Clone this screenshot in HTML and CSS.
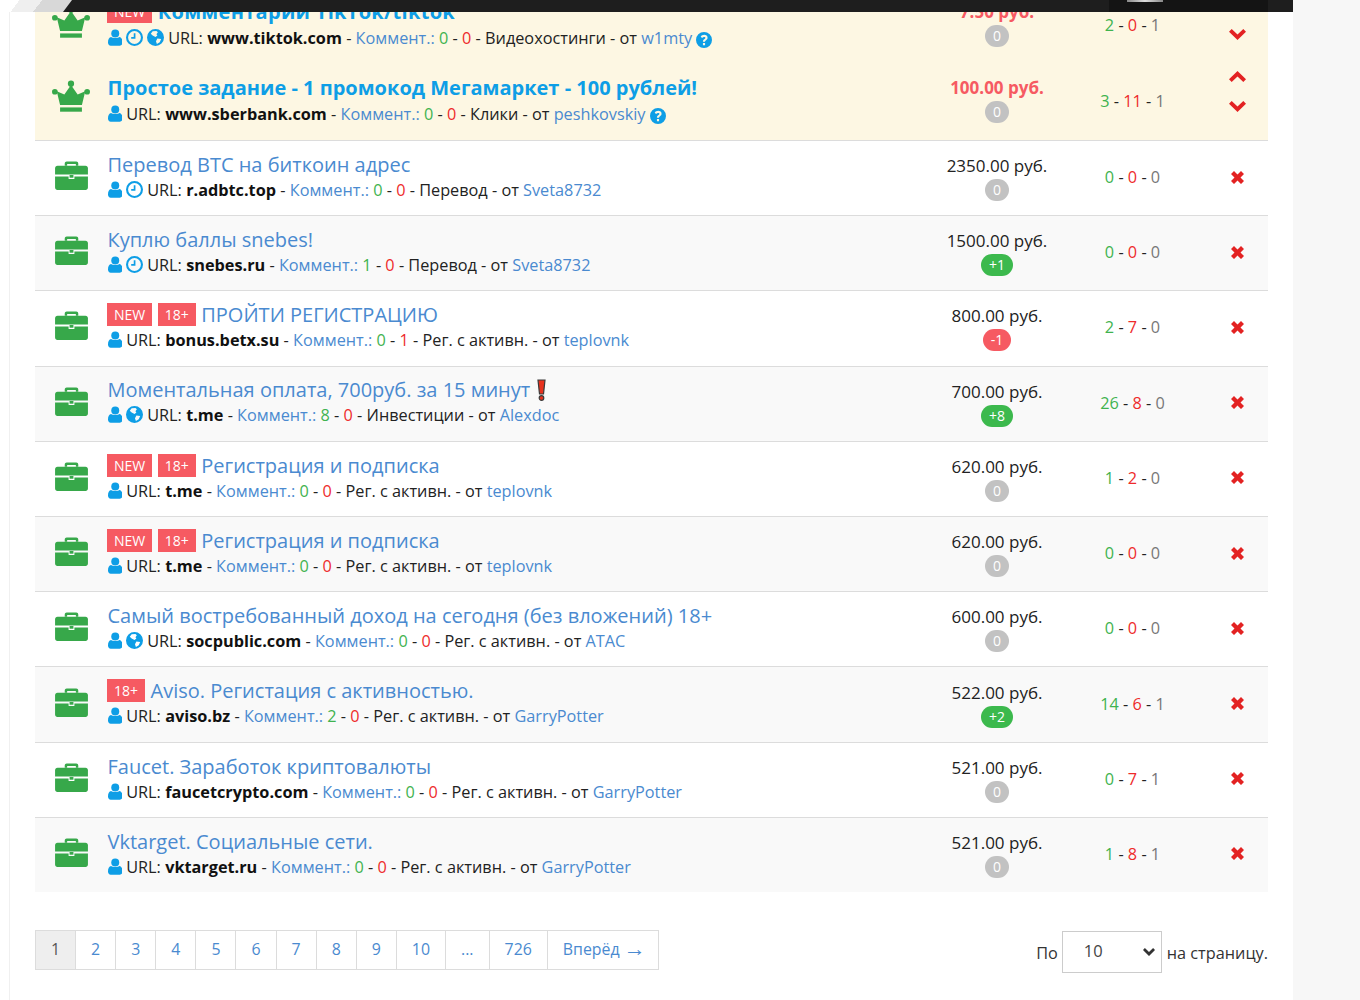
FILE: index.html
```html
<!DOCTYPE html>
<html lang="ru">
<head>
    <meta charset="UTF-8">
    <meta name="viewport" content="width=device-width, initial-scale=1.0">
    <title>Задания</title>
    <link rel="stylesheet" href="styles.css">
</head>
<body>
    <svg class="defs" width="0" height="0">
        <symbol id="i-crown" viewBox="0 0 40 34">
            <circle cx="20" cy="3.5" r="3.3"/><circle cx="3" cy="12" r="3"/><circle cx="37" cy="12" r="3"/>
            <path d="M20 5 27 15 35 11.5 31.5 26H8.500L5 11.500 13 15Z"/>
            <path d="M8.500 28.500h23v4.500h-23z"/>
        </symbol>
        <symbol id="i-case" viewBox="0 0 34 30">
            <path d="M10 5V2.500C10 1.300 11 .5 12 .5h10c1.100 0 2 .8 2 2V5h-2.500V3h-9v2Z"/>
            <path d="M2.500 5h29C33 5 34 6 34 7.500V14H0V7.500C0 6 1 5 2.500 5Z"/>
            <path d="M0 16h14v2.500h6V16h14v11.500c0 1.400-1 2.500-2.500 2.500h-29C1 30 0 28.900 0 27.500Z"/>
            <path d="M15 14.500h4v2.800h-4z"/>
        </symbol>
        <symbol id="i-user" viewBox="0 0 16 18">
            <circle cx="8" cy="4.600" r="4.400"/>
            <path d="M3.500 8.500C5 10 11 10 12.500 8.500 14.800 9 16 11 16 14.500 16 16.800 14.800 18 13 18H3C1.200 18 0 16.800 0 14.500 0 11 1.200 9 3.500 8.500Z"/>
        </symbol>
        <symbol id="i-clock" viewBox="0 0 18 18">
            <path fill-rule="evenodd" d="M9 0a9 9 0 1 0 0 18A9 9 0 0 0 9 0Zm0 2.200a6.800 6.800 0 1 1 0 13.600A6.800 6.800 0 0 1 9 2.200Z"/>
            <path d="M8.200 4.500h1.800v5.700H5.500V8.500h2.700Z"/>
        </symbol>
        <symbol id="i-globe" viewBox="0 0 18 18">
            <path d="M9 0a9 9 0 1 0 0 18A9 9 0 0 0 9 0ZM6 2.500 10 2l1.500 1.500L10 5.500l1 1.500-2 1.500L6 7 4 5Zm5 7.500 4 .5-1.500 3.500-3 2-1-3Z"/>
        </symbol>
        <symbol id="i-help" viewBox="0 0 18 18">
            <path fill-rule="evenodd" d="M9 0a9 9 0 1 0 0 18A9 9 0 0 0 9 0ZM7.800 12.500h2.400V15H7.800Zm2.400-1.600H7.800c0-2.600 2.800-2.800 2.800-4.300 0-.7-.7-1.100-1.500-1.100-.9 0-1.600.4-2.200 1.200L5.300 5.300C6.200 4 7.500 3.200 9.300 3.200c2 0 3.700 1.100 3.700 3.200 0 2.600-2.800 2.700-2.800 4.500Z"/>
        </symbol>
        <symbol id="i-up" viewBox="0 0 17 11"><path d="M8.500 0 17 8.200 14.300 11 8.500 5.400 2.700 11 0 8.200Z"/></symbol>
        <symbol id="i-down" viewBox="0 0 17 11"><path d="M8.500 11 0 2.800 2.700 0l5.800 5.600L14.300 0 17 2.800Z"/></symbol>
        <symbol id="i-x" viewBox="0 0 13 13"><path d="M3 0 6.500 3.500 10 0 13 3 9.500 6.500 13 10 10 13 6.500 9.500 3 13 0 10 3.500 6.500 0 3Z"/></symbol>
        <symbol id="i-excl" viewBox="0 0 9 22">
            <path d="M1 1h7L6.500 15h-4Z" fill="#e8321e" stroke="#3a3a3a" stroke-width="1.200"/>
            <circle cx="4.500" cy="19" r="2.300" fill="#e8321e" stroke="#3a3a3a" stroke-width="1.200"/>
        </symbol>
    </svg>

    <div class="topbar">
        <div class="topbar-corner"></div>
        <div class="topbar-user"><span class="topbar-avatar"></span></div>
    </div>

    <div class="page">
        <div class="jobs">
            <!-- top rows -->
            <div class="job top first">
                <svg class="job-icon crown"><use href="#i-crown"/></svg>
                <div class="job-main">
                    <div class="job-title"><span class="tag">NEW</span><a href="#">Комментарии TikTok/tiktok</a></div>
                    <div class="job-meta">
                        <svg class="ic"><use href="#i-user"/></svg><svg class="ic"><use href="#i-clock"/></svg><svg class="ic"><use href="#i-globe"/></svg>
                        URL: <b>www.tiktok.com</b> - <a href="#">Коммент.:</a> <span class="g">0</span> - <span class="r">0</span> - Видеохостинги - от <a href="#">w1mty</a>
                        <svg class="ic help"><use href="#i-help"/></svg>
                    </div>
                </div>
                <div class="job-price"><div class="sum">7.50 руб.</div><span class="pill">0</span></div>
                <div class="job-stats"><span class="g">2</span> - <span class="r">0</span> - <span class="n">1</span></div>
                <div class="job-act"><svg class="arrow"><use href="#i-down"/></svg></div>
            </div>
            <div class="job top">
                <svg class="job-icon crown"><use href="#i-crown"/></svg>
                <div class="job-main">
                    <div class="job-title"><a href="#">Простое задание - 1 промокод Мегамаркет - 100 рублей!</a></div>
                    <div class="job-meta">
                        <svg class="ic"><use href="#i-user"/></svg>
                        URL: <b>www.sberbank.com</b> - <a href="#">Коммент.:</a> <span class="g">0</span> - <span class="r">0</span> - Клики - от <a href="#">peshkovskiy</a>
                        <svg class="ic help"><use href="#i-help"/></svg>
                    </div>
                </div>
                <div class="job-price"><div class="sum">100.00 руб.</div><span class="pill">0</span></div>
                <div class="job-stats"><span class="g">3</span> - <span class="r">11</span> - <span class="n">1</span></div>
                <div class="job-act two"><svg class="arrow"><use href="#i-up"/></svg><svg class="arrow"><use href="#i-down"/></svg></div>
            </div>

            <!-- normal rows -->
            <div class="job">
                <svg class="job-icon"><use href="#i-case"/></svg>
                <div class="job-main">
                    <div class="job-title"><a href="#">Перевод BTC на биткоин адрес</a></div>
                    <div class="job-meta">
                        <svg class="ic"><use href="#i-user"/></svg><svg class="ic"><use href="#i-clock"/></svg>
                        URL: <b>r.adbtc.top</b> - <a href="#">Коммент.:</a> <span class="g">0</span> - <span class="r">0</span> - Перевод - от <a href="#">Sveta8732</a>
                    </div>
                </div>
                <div class="job-price"><div class="sum">2350.00 руб.</div><span class="pill">0</span></div>
                <div class="job-stats"><span class="g">0</span> - <span class="r">0</span> - <span class="n">0</span></div>
                <div class="job-act"><svg class="del"><use href="#i-x"/></svg></div>
            </div>
            <div class="job">
                <svg class="job-icon"><use href="#i-case"/></svg>
                <div class="job-main">
                    <div class="job-title"><a href="#">Куплю баллы snebes!</a></div>
                    <div class="job-meta">
                        <svg class="ic"><use href="#i-user"/></svg><svg class="ic"><use href="#i-clock"/></svg>
                        URL: <b>snebes.ru</b> - <a href="#">Коммент.:</a> <span class="g">1</span> - <span class="r">0</span> - Перевод - от <a href="#">Sveta8732</a>
                    </div>
                </div>
                <div class="job-price"><div class="sum">1500.00 руб.</div><span class="pill plus">+1</span></div>
                <div class="job-stats"><span class="g">0</span> - <span class="r">0</span> - <span class="n">0</span></div>
                <div class="job-act"><svg class="del"><use href="#i-x"/></svg></div>
            </div>
            <div class="job">
                <svg class="job-icon"><use href="#i-case"/></svg>
                <div class="job-main">
                    <div class="job-title"><span class="tag">NEW</span><span class="tag">18+</span><a href="#">ПРОЙТИ РЕГИСТРАЦИЮ</a></div>
                    <div class="job-meta">
                        <svg class="ic"><use href="#i-user"/></svg>
                        URL: <b>bonus.betx.su</b> - <a href="#">Коммент.:</a> <span class="g">0</span> - <span class="r">1</span> - Рег. с активн. - от <a href="#">teplovnk</a>
                    </div>
                </div>
                <div class="job-price"><div class="sum">800.00 руб.</div><span class="pill minus">-1</span></div>
                <div class="job-stats"><span class="g">2</span> - <span class="r">7</span> - <span class="n">0</span></div>
                <div class="job-act"><svg class="del"><use href="#i-x"/></svg></div>
            </div>
            <div class="job">
                <svg class="job-icon"><use href="#i-case"/></svg>
                <div class="job-main">
                    <div class="job-title"><a href="#">Моментальная оплата, 700руб. за 15 минут</a><svg class="excl"><use href="#i-excl"/></svg></div>
                    <div class="job-meta">
                        <svg class="ic"><use href="#i-user"/></svg><svg class="ic"><use href="#i-globe"/></svg>
                        URL: <b>t.me</b> - <a href="#">Коммент.:</a> <span class="g">8</span> - <span class="r">0</span> - Инвестиции - от <a href="#">Alexdoc</a>
                    </div>
                </div>
                <div class="job-price"><div class="sum">700.00 руб.</div><span class="pill plus">+8</span></div>
                <div class="job-stats"><span class="g">26</span> - <span class="r">8</span> - <span class="n">0</span></div>
                <div class="job-act"><svg class="del"><use href="#i-x"/></svg></div>
            </div>
            <div class="job">
                <svg class="job-icon"><use href="#i-case"/></svg>
                <div class="job-main">
                    <div class="job-title"><span class="tag">NEW</span><span class="tag">18+</span><a href="#">Регистрация и подписка</a></div>
                    <div class="job-meta">
                        <svg class="ic"><use href="#i-user"/></svg>
                        URL: <b>t.me</b> - <a href="#">Коммент.:</a> <span class="g">0</span> - <span class="r">0</span> - Рег. с активн. - от <a href="#">teplovnk</a>
                    </div>
                </div>
                <div class="job-price"><div class="sum">620.00 руб.</div><span class="pill">0</span></div>
                <div class="job-stats"><span class="g">1</span> - <span class="r">2</span> - <span class="n">0</span></div>
                <div class="job-act"><svg class="del"><use href="#i-x"/></svg></div>
            </div>
            <div class="job">
                <svg class="job-icon"><use href="#i-case"/></svg>
                <div class="job-main">
                    <div class="job-title"><span class="tag">NEW</span><span class="tag">18+</span><a href="#">Регистрация и подписка</a></div>
                    <div class="job-meta">
                        <svg class="ic"><use href="#i-user"/></svg>
                        URL: <b>t.me</b> - <a href="#">Коммент.:</a> <span class="g">0</span> - <span class="r">0</span> - Рег. с активн. - от <a href="#">teplovnk</a>
                    </div>
                </div>
                <div class="job-price"><div class="sum">620.00 руб.</div><span class="pill">0</span></div>
                <div class="job-stats"><span class="g">0</span> - <span class="r">0</span> - <span class="n">0</span></div>
                <div class="job-act"><svg class="del"><use href="#i-x"/></svg></div>
            </div>
            <div class="job">
                <svg class="job-icon"><use href="#i-case"/></svg>
                <div class="job-main">
                    <div class="job-title"><a href="#">Самый востребованный доход на сегодня (без вложений) 18+</a></div>
                    <div class="job-meta">
                        <svg class="ic"><use href="#i-user"/></svg><svg class="ic"><use href="#i-globe"/></svg>
                        URL: <b>socpublic.com</b> - <a href="#">Коммент.:</a> <span class="g">0</span> - <span class="r">0</span> - Рег. с активн. - от <a href="#">ATAC</a>
                    </div>
                </div>
                <div class="job-price"><div class="sum">600.00 руб.</div><span class="pill">0</span></div>
                <div class="job-stats"><span class="g">0</span> - <span class="r">0</span> - <span class="n">0</span></div>
                <div class="job-act"><svg class="del"><use href="#i-x"/></svg></div>
            </div>
            <div class="job">
                <svg class="job-icon"><use href="#i-case"/></svg>
                <div class="job-main">
                    <div class="job-title"><span class="tag">18+</span><a href="#">Aviso. Регистация с активностью.</a></div>
                    <div class="job-meta">
                        <svg class="ic"><use href="#i-user"/></svg>
                        URL: <b>aviso.bz</b> - <a href="#">Коммент.:</a> <span class="g">2</span> - <span class="r">0</span> - Рег. с активн. - от <a href="#">GarryPotter</a>
                    </div>
                </div>
                <div class="job-price"><div class="sum">522.00 руб.</div><span class="pill plus">+2</span></div>
                <div class="job-stats"><span class="g">14</span> - <span class="r">6</span> - <span class="n">1</span></div>
                <div class="job-act"><svg class="del"><use href="#i-x"/></svg></div>
            </div>
            <div class="job">
                <svg class="job-icon"><use href="#i-case"/></svg>
                <div class="job-main">
                    <div class="job-title"><a href="#">Faucet. Заработок криптовалюты</a></div>
                    <div class="job-meta">
                        <svg class="ic"><use href="#i-user"/></svg>
                        URL: <b>faucetcrypto.com</b> - <a href="#">Коммент.:</a> <span class="g">0</span> - <span class="r">0</span> - Рег. с активн. - от <a href="#">GarryPotter</a>
                    </div>
                </div>
                <div class="job-price"><div class="sum">521.00 руб.</div><span class="pill">0</span></div>
                <div class="job-stats"><span class="g">0</span> - <span class="r">7</span> - <span class="n">1</span></div>
                <div class="job-act"><svg class="del"><use href="#i-x"/></svg></div>
            </div>
            <div class="job">
                <svg class="job-icon"><use href="#i-case"/></svg>
                <div class="job-main">
                    <div class="job-title"><a href="#">Vktarget. Социальные сети.</a></div>
                    <div class="job-meta">
                        <svg class="ic"><use href="#i-user"/></svg>
                        URL: <b>vktarget.ru</b> - <a href="#">Коммент.:</a> <span class="g">0</span> - <span class="r">0</span> - Рег. с активн. - от <a href="#">GarryPotter</a>
                    </div>
                </div>
                <div class="job-price"><div class="sum">521.00 руб.</div><span class="pill">0</span></div>
                <div class="job-stats"><span class="g">1</span> - <span class="r">8</span> - <span class="n">1</span></div>
                <div class="job-act"><svg class="del"><use href="#i-x"/></svg></div>
            </div>
        </div>

        <div class="list-footer">
            <div class="pager">
                <a class="active" href="#">1</a>
                <a href="#">2</a>
                <a href="#">3</a>
                <a href="#">4</a>
                <a href="#">5</a>
                <a href="#">6</a>
                <a href="#">7</a>
                <a href="#">8</a>
                <a href="#">9</a>
                <a href="#">10</a>
                <a href="#">...</a>
                <a href="#">726</a>
                <a href="#">Вперёд <span class="next-arrow">→</span></a>
            </div>
            <div class="per-page">
                По
                <select>
                    <option>10</option>
                    <option>25</option>
                    <option>50</option>
                </select>
                на страницу.
            </div>
        </div>
    </div>
</body>
</html>
```

FILE: styles.css
```css
body {
    margin: 0;
    background-color: #f7f7f7;
    font-family: "Open Sans", "Noto Sans", sans-serif;
    font-size: 16.28px;
    color: #222;
    height: 1000px;
    overflow: hidden;
}
a {
    color: #4a8ad0;
    text-decoration: none;
}
.defs {
    position: absolute;
}

/* top bar, fixed over the scrolled page */
.topbar {
    position: fixed;
    top: 0;
    left: 0;
    width: 1293px;
    height: 12px;
    background-color: #1e1e1e;
    z-index: 5;
}
.topbar-corner {
    position: absolute;
    left: 0;
    top: 0;
    width: 72px;
    height: 12px;
    background: linear-gradient(127deg, #ffffff 0 24%, #efefef 24% 52%, #d8d8d8 52%);
    clip-path: polygon(0 0, 100% 0, 87.500% 100%, 0 100%);
}
.topbar-user {
    position: absolute;
    left: 1109px;
    width: 159px;
    top: 0;
    height: 12px;
    background-color: #141414;
}
.topbar-avatar {
    position: absolute;
    left: 18px;
    top: 0;
    width: 36px;
    height: 2px;
    background: linear-gradient(90deg, #888, #ddd, #888);
}

.page {
    display: flow-root;
    width: 1233px;
    height: 1000px;
    margin-left: 9px;
    padding: 0 25px;
    background-color: #fff;
    border-left: 1px solid #f0f0f0;
    box-shadow: -9px 0 0 #fff;
}

/* job list */
.jobs {
    margin-top: -12px;
}
.job {
    display: grid;
    grid-template-columns: 72.500px 1fr 124px 147px 62px;
    align-items: center;
    box-sizing: border-box;
    height: 75.22px;
    border-bottom: 1px solid #dcdcdc;
}
.job:nth-child(even) {
    background-color: #f9f9f9;
}
.job:nth-child(odd) {
    background-color: #fff;
}
.job:last-child {
    height: 74px;
    border-bottom: 0;
}
.job.top {
    background-color: #fdf7e3;
    border-bottom: 0;
}
.job.top + .job.top {
    height: 77.700px;
    border-bottom: 1px solid #dcdcdc;
}
.job-icon {
    width: 33px;
    height: 29px;
    margin: 0 0 5px 20px;
    fill: #37a84a;
}
.job-icon.crown {
    width: 38px;
    height: 33px;
    margin: 0 0 10px 17px;
}
.first .job-icon.crown {
    margin-bottom: 6px;
}
.job-main {
    padding-bottom: 3.500px;
}
.job-title {
    display: flex;
    align-items: center;
    font-size: 20px;
    line-height: 27px;
}
.top .job-title {
    font-weight: 700;
    line-height: 28px;
}
.top .job-title a {
    color: #0e9ee6;
}
.first .job-title a {
    letter-spacing: 0.3px;
}
.tag {
    background-color: #f65a62;
    color: #fff;
    font-size: 14px;
    font-weight: 400;
    line-height: 23px;
    padding: 0 7px;
    margin-right: 5.500px;
}
.tag:first-child {
    margin-left: -0.5px;
}
.excl {
    width: 9px;
    height: 22px;
    margin-left: 7px;
}
.job-meta {
    line-height: 24px;
    white-space: nowrap;
    color: #222;
}
.job-meta b {
    color: #111;
}
.ic {
    width: 14.500px;
    height: 17px;
    fill: #0e9ee6;
    vertical-align: -2px;
}
.ic + .ic {
    width: 17px;
    height: 17px;
    margin-left: 4px;
}
.ic.help {
    width: 16px;
    height: 16px;
    vertical-align: -4px;
    margin: 0;
}
.g { color: #3fb34f; }
.r { color: #ee2b2b; }
.n { color: #777; }

.job-price {
    text-align: center;
    padding-bottom: 2px;
}
.top .job-price {
    padding-bottom: 6px;
}
.sum {
    font-size: 17px;
    line-height: 25px;
}
.top .sum {
    font-weight: 700;
    color: #f65a62;
}
.pill {
    display: inline-block;
    min-width: 8px;
    padding: 0 7.500px;
    height: 22px;
    line-height: 22px;
    border-radius: 11px;
    background-color: #c2c2c2;
    color: #fff;
    font-size: 14px;
}
.pill.plus {
    background-color: #3cb94d;
}
.pill.minus {
    background-color: #f65a62;
}
.job-stats {
    text-align: center;
    padding-bottom: 2px;
}
.job-act {
    display: flex;
    flex-direction: column;
    align-items: center;
    gap: 19px;
    padding-bottom: 2px;
}
.job-act.two {
    margin-bottom: 18px;
}
.first .job-act {
    margin-top: 20px;
}
.arrow {
    width: 17px;
    height: 11px;
    fill: #e32222;
}
.del {
    width: 13px;
    height: 13px;
    fill: #e32222;
}

/* footer */
.list-footer {
    display: flex;
    justify-content: space-between;
    align-items: flex-start;
    margin-top: 38px;
}
.pager {
    display: flex;
    border: 1px solid #dcdcdc;
    height: 38px;
}
.pager a {
    padding: 0 15px;
    line-height: 37px;
    border-right: 1px solid #dcdcdc;
    font-size: 15.900px;
    min-width: 9px;
    text-align: center;
    white-space: nowrap;
}
.pager a:last-child {
    border-right: 0;
}
.pager a.active {
    background-color: #eee;
    color: #555;
}
.next-arrow {
    font-family: "Liberation Sans", sans-serif;
    font-size: 22px;
    line-height: 0;
    vertical-align: -1px;
    margin-right: -3px;
}
.per-page {
    display: flex;
    align-items: center;
    gap: 4px;
    height: 42px;
    color: #333;
    padding-top: 2px;
}
.per-page select {
    appearance: none;
    width: 100px;
    height: 42px;
    margin: -2px 1px 0 0;
    padding: 0 0 2px 21px;
    font-family: inherit;
    font-size: 16.500px;
    color: #444;
    border: 1px solid #ccc;
    border-radius: 0;
    background: #fff url("data:image/svg+xml,%3Csvg xmlns='http://www.w3.org/2000/svg' width='12' height='8' viewBox='0 0 17 11'%3E%3Cpath fill='%23333' d='M8.500 11 0 2.800 2.700 0l5.800 5.600L14.300 0 17 2.800Z'/%3E%3C/svg%3E") no-repeat right 6px center;
}
```
